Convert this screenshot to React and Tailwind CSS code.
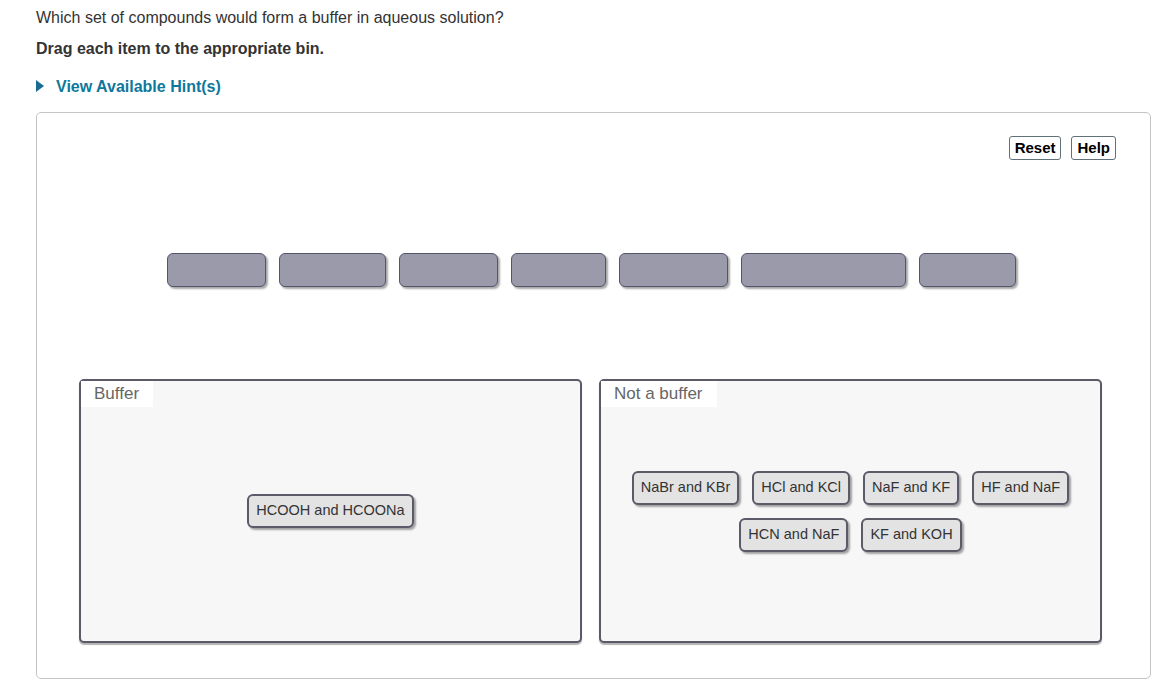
const tiles = [99, 107, 99, 95, 109, 165, 97];

const bins = [
  { label: "Buffer", items: ["HCOOH and HCOONa"] },
  {
    label: "Not a buffer",
    items: ["NaBr and KBr", "HCl and KCl", "NaF and KF", "HF and NaF", "HCN and NaF", "KF and KOH"],
  },
];

function Item({ children }) {
  return (
    <div className="h-[34px] px-[7px] flex items-center rounded-[6px] border-2 border-[#5a5a68] bg-[#e3e3e3] text-[14.5px] text-[#333] shadow-[2px_2px_2px_rgba(0,0,0,0.35)] whitespace-nowrap">
      {children}
    </div>
  );
}

export default function App() {
  return (
    <div className="min-h-screen bg-white pl-[36px] pt-[8px] font-['Liberation_Sans',Arial,sans-serif] text-[#333]">
      <p className="text-[16px] leading-[20px]">Which set of compounds would form a buffer in aqueous solution?</p>
      <p className="mt-[11px] text-[16px] leading-[20px] font-bold">Drag each item to the appropriate bin.</p>

      <div className="mt-[18px] flex items-center gap-[12px] text-[#0d789c]">
        <svg width="8" height="12" viewBox="0 0 8 12" className="-mt-[2px]">
          <path d="M0 0 L8 6 L0 12 Z" fill="#1b6a93" />
        </svg>
        <span className="text-[16px] leading-[20px] font-bold">View Available Hint(s)</span>
      </div>

      {/* activity */}
      <div className="mt-[15px] w-[1115px] rounded-[5px] border border-[#c4c4c4] pt-[23px] pb-[35px]">
        <div className="flex justify-end gap-[10px] pr-[34px]">
          <button className="h-[24px] px-[5px] rounded-[3px] border border-[#61717a] bg-white text-[15px] font-bold text-black">
            Reset
          </button>
          <button className="h-[24px] px-[5px] rounded-[3px] border border-[#61717a] bg-white text-[15px] font-bold text-black">
            Help
          </button>
        </div>

        <div className="mt-[93px] flex gap-[13px] pl-[130px]">
          {tiles.map((w, i) => (
            <div
              key={i}
              style={{ width: w }}
              className="h-[34px] rounded-[6px] border-[1.5px] border-[#55556a] bg-[#9b9aab] shadow-[2px_2px_2px_rgba(0,0,0,0.35)]"
            />
          ))}
        </div>

        <div className="mt-[92px] ml-[42px] flex gap-[17px]">
          {bins.map((b) => (
            <div
              key={b.label}
              className="relative w-[503px] h-[264px] rounded-[5px] border-2 border-[#5a5a68] bg-[#f7f7f7] shadow-[0_2px_1px_rgba(0,0,0,0.3)] flex flex-wrap justify-center content-center gap-[13px] px-[30px]"
            >
              <div className="absolute left-0 top-0 h-[26px] bg-white pl-[13px] pr-[14px] text-[17px] leading-[26px] text-[#666]">
                {b.label}
              </div>
              {b.items.map((it) => (
                <Item key={it}>{it}</Item>
              ))}
            </div>
          ))}
        </div>
      </div>
    </div>
  );
}
